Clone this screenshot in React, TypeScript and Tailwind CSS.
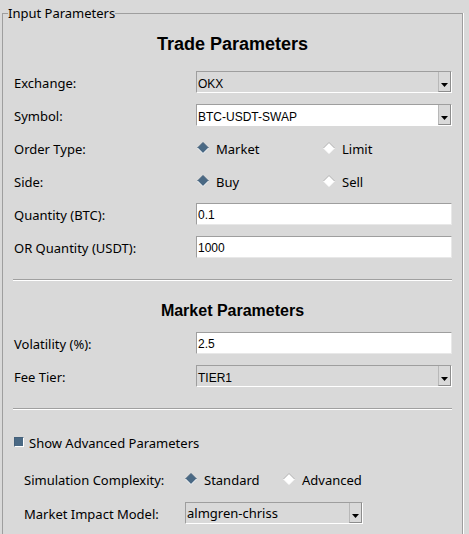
const noto = "font-['Noto_Sans',sans-serif] text-[13px] leading-[18px] text-black"
const arial = "font-['Liberation_Sans',Arial,sans-serif] text-[12px] leading-[14px] text-black"

function Arrow() {
  return (
    <svg width="7" height="4" viewBox="0 0 7 4">
      <polygon points="0,0 7,0 3.5,4" fill="#000" />
    </svg>
  )
}

function Combo({ value, white = false, noto: useNoto = false }: { value: string; white?: boolean; noto?: boolean }) {
  return (
    <div
      className={`flex h-[22px] w-full border-t border-l border-[#9e9e9e] border-r border-b border-r-white border-b-white ${
        white ? 'bg-white' : 'bg-[#d9d9d9]'
      }`}
    >
      {useNoto ? (
        <div className={`flex-1 flex items-center pl-[1px] ${noto}`}>{value}</div>
      ) : (
        <div className={`flex-1 pl-[1px] pt-[5px] ${arial}`}>{value}</div>
      )}
      <div className="w-[13px] flex items-end justify-center pb-[4px] bg-[#d9d9d9] border-l border-[#b8b8b8] border-r border-b border-r-[#8c8c8c] border-b-[#8c8c8c]">
        <Arrow />
      </div>
    </div>
  )
}

function Entry({ value }: { value: string }) {
  return (
    <div className="h-[22px] w-full bg-white border-t border-l border-[#9e9e9e] border-r border-b border-r-[#e8e8e8] border-b-[#e8e8e8]">
      <div className={`pl-[1px] pt-[4px] ${arial}`}>{value}</div>
    </div>
  )
}

function Diamond({ on }: { on: boolean }) {
  return (
    <svg width="12" height="12" viewBox="0 0 12 12" className="shrink-0">
      <polygon points="6,0.5 11.5,6 6,11.5 0.5,6" fill={on ? '#4a6984' : '#ffffff'} />
      <polyline points="0.5,6 6,0.5 11.5,6" fill="none" stroke={on ? '#44607a' : '#b0b0b0'} strokeWidth="1" />
      <polyline points="0.5,6 6,11.5 11.5,6" fill="none" stroke="#ffffff" strokeWidth="1" />
    </svg>
  )
}

function Radio({ label, on, width }: { label: string; on: boolean; width: string }) {
  return (
    <div className={`flex items-center gap-[7px] ${width}`}>
      <Diamond on={on} />
      <span className={`${noto} mt-[2px]`}>{label}</span>
    </div>
  )
}

function Row({ label, children }: { label: string; children: React.ReactNode }) {
  return (
    <div className="flex items-center h-[22px]">
      <div className={`w-[183px] shrink-0 pl-[1px] mt-[2px] ${noto}`}>{label}</div>
      <div className="flex-1 flex items-center">{children}</div>
    </div>
  )
}

function Separator() {
  return <div className="h-[2px] border-t border-[#a0a0a0] border-b border-b-white" />
}

export default function App() {
  return (
    <div className="w-[469px] h-[534px] overflow-hidden bg-[#d9d9d9] pt-[3px]">
      <fieldset className="ml-[2px] w-[461px] h-[600px] border border-[#9e9e9e] shadow-[1px_0_0_#ffffff]">
        <legend className={`ml-[5px] leading-[20px] ${noto} text-[13px]`}>Input Parameters</legend>

        <div className="px-[10px]">
          <h2 className="mt-[9px] h-[24px] text-center font-['Liberation_Sans',Arial,sans-serif] font-bold text-[18px] leading-[24px] text-black">
            Trade Parameters
          </h2>

          <div className="mt-[15px] flex flex-col gap-[11px]">
            <Row label="Exchange:">
              <Combo value="OKX" />
            </Row>
            <Row label="Symbol:">
              <Combo value="BTC-USDT-SWAP" white />
            </Row>
            <Row label="Order Type:">
              <div className="flex pl-[1px]">
                <Radio label="Market" on width="w-[126px]" />
                <Radio label="Limit" on={false} width="" />
              </div>
            </Row>
            <Row label="Side:">
              <div className="flex pl-[1px]">
                <Radio label="Buy" on width="w-[126px]" />
                <Radio label="Sell" on={false} width="" />
              </div>
            </Row>
            <Row label="Quantity (BTC):">
              <Entry value="0.1" />
            </Row>
            <Row label="OR Quantity (USDT):">
              <Entry value="1000" />
            </Row>
          </div>

          <div className="mt-[21px]">
            <Separator />
          </div>

          <h2 className="mt-[19px] h-[22px] text-center font-['Liberation_Sans',Arial,sans-serif] font-bold text-[16px] leading-[22px] text-black">
            Market Parameters
          </h2>

          <div className="mt-[10px] flex flex-col gap-[11px]">
            <Row label="Volatility (%):">
              <Entry value="2.5" />
            </Row>
            <Row label="Fee Tier:">
              <Combo value="TIER1" />
            </Row>
          </div>

          <div className="mt-[21px]">
            <Separator />
          </div>

          <div className="mt-[22px] h-[20px] flex items-center pl-[1px]">
            <div className="w-[10px] h-[10px] bg-[#4a6984] border-t border-l border-[#44607a] border-r border-b border-r-white border-b-white" />
            <span className={`ml-[5px] mt-[2px] ${noto}`}>Show Advanced Parameters</span>
          </div>

          <div className="mt-[16px] pl-[11px] flex flex-col gap-[12px]">
            <div className="flex items-center h-[22px]">
              <div className={`w-[161px] shrink-0 mt-[2px] ${noto}`}>Simulation Complexity:</div>
              <div className="flex">
                <Radio label="Standard" on width="w-[98px]" />
                <Radio label="Advanced" on={false} width="" />
              </div>
            </div>
            <div className="flex items-center h-[22px]">
              <div className={`w-[161px] shrink-0 mt-[2px] ${noto}`}>Market Impact Model:</div>
              <div className="w-[178px]">
                <Combo value="almgren-chriss" noto />
              </div>
            </div>
          </div>
        </div>
      </fieldset>
    </div>
  )
}
